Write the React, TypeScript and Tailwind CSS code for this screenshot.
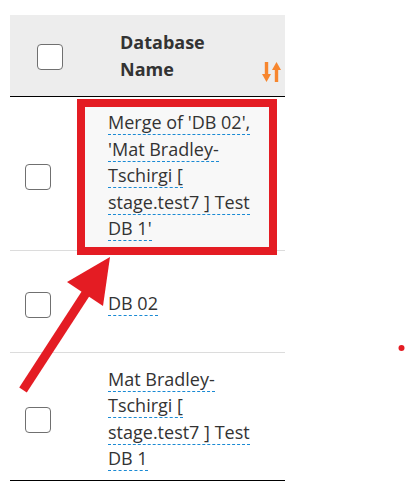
import React from 'react';

interface Row {
  name: string;
  height: string;
  last?: boolean;
}

const rows: Row[] = [
  { name: "Merge of 'DB 02', 'Mat Bradley-Tschirgi [ stage.test7 ] Test DB 1'", height: 'h-[154px]' },
  { name: 'DB 02', height: 'h-[102px]' },
  { name: 'Mat Bradley-Tschirgi [ stage.test7 ] Test DB 1', height: 'h-[128px]', last: true },
];

function Checkbox() {
  return <div className="w-[26px] h-[26px] rounded-[4px] border-[1.5px] border-[#707070] bg-white" />;
}

function SortIcon() {
  return (
    <svg width="19" height="20" viewBox="0 0 19 20" fill="#f7862e">
      <rect x="2.8" y="0" width="3.4" height="13" />
      <polygon points="0,12 9,12 4.5,20" />
      <rect x="12.8" y="7" width="3.4" height="13" />
      <polygon points="10,8 19,8 14.5,0" />
    </svg>
  );
}

export default function App() {
  return (
    <div className="relative w-[405px] h-[483px] bg-white font-['Open_Sans',sans-serif] text-[#333]">
      {/* highlight fill behind the first cell */}
      <div className="absolute left-[85px] top-[107px] w-[184px] h-[140px] bg-[#f8f8f8]" />

      <div className="relative pt-[15px] pl-[10px] w-[285px]">
        <div className="flex items-center h-[82px] bg-[#ededed] border-b border-black">
          <div className="w-[98px] pl-[27px] pt-[2px]">
            <Checkbox />
          </div>
          <div className="flex-1 flex items-end justify-between pl-[12px] pr-[4px] pb-[16px]">
            <div className="font-bold text-[18px] leading-[26.5px] pt-[16px]">
              Database
              <br />
              Name
            </div>
            <div className="pb-[0px]">
              <SortIcon />
            </div>
          </div>
        </div>
        {rows.map((row, i) => (
          <div
            key={i}
            className={`flex items-center ${row.height} border-b ${row.last ? 'border-black' : 'border-[#dcdcdc]'}`}
          >
            <div className="w-[98px] pl-[15px] pt-[6px]">
              <Checkbox />
            </div>
            <div className="w-[155px] text-[18px] leading-[26.5px] pt-[4px]">
              <span className="border-b border-dashed border-[#1a8ad4]">{row.name}</span>
            </div>
          </div>
        ))}
      </div>

      {/* annotation */}
      <div className="absolute left-[77px] top-[99px] w-[200px] h-[156px] border-[8.5px] border-[#e41c23]" />
      <svg className="absolute left-0 top-0" width="405" height="483" viewBox="0 0 405 483">
        <line x1="23" y1="390" x2="88" y2="290" stroke="#e41c23" strokeWidth="9" />
        <polygon points="110,257 67,282 103,306" fill="#e41c23" />
        <circle cx="401.5" cy="348" r="3" fill="#e41c23" />
      </svg>
    </div>
  );
}
